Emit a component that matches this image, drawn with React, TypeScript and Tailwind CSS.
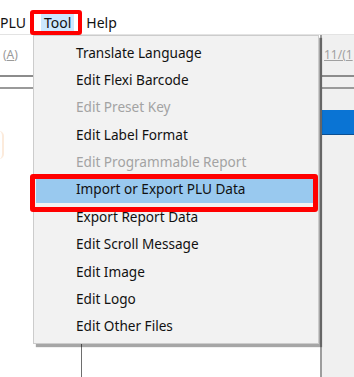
const items: { label: string; disabled?: boolean; active?: boolean }[] = [
  { label: "Translate Language" },
  { label: "Edit Flexi Barcode" },
  { label: "Edit Preset Key", disabled: true },
  { label: "Edit Label Format" },
  { label: "Edit Programmable Report", disabled: true },
  { label: "Import or Export PLU Data", active: true },
  { label: "Export Report Data" },
  { label: "Edit Scroll Message" },
  { label: "Edit Image" },
  { label: "Edit Logo" },
  { label: "Edit Other Files" },
];

export default function App() {
  return (
    <div className="relative w-[354px] h-[377px] overflow-hidden bg-white font-['Noto_Sans',sans-serif] text-[14px] text-[#111111]">
      {/* menu bar */}
      <div className="flex h-[35px] items-end pb-[1px] border-b border-[#e3e3e3] leading-[20px]">
        <span className="ml-0">PLU</span>
        <span className="ml-[15px] px-[3px] bg-[#cce8ff]">Tool</span>
        <span className="ml-[12px]">Help</span>
      </div>

      {/* window body */}
      <div className="flex h-[342px]">
        <div className="w-[33px] flex flex-col bg-white">
          <div className="h-[40px] pt-[12px] pl-[3px] text-[12px] text-[#9a9a9a] leading-[16px]">
            (<span className="underline">A</span>)
          </div>
          <div className="h-[2px] bg-[#8c8c8c]" />
          <div className="h-[10px]" />
          <div className="h-[2px] bg-[#9a9a9a]" />
          <div className="mt-[42px] ml-[-6px] w-[10px] h-[28px] rounded-full border-r-[2px] border-[#fcebdc]" />
        </div>
        <div className="flex-1 bg-white">
          <div className="ml-[48px] h-full border-l border-[#6e6e6e]" />
        </div>
        <div className="w-[34px] flex flex-col bg-[#f0f0f0] border-l-[2px] border-[#9d9d9d]">
          <div className="h-[40px] pt-[12px] pl-[2px] text-[12px] text-[#a0a0a0] leading-[16px] underline whitespace-nowrap">
            11/(1
          </div>
          <div className="h-[2px] bg-[#8c8c8c]" />
          <div className="h-[10px]" />
          <div className="h-[2px] bg-[#9a9a9a]" />
          <div className="mt-[21px] h-[25px] bg-[#0a74d4] border-b border-[#0b4f91]" />
        </div>
      </div>

      {/* dropdown menu */}
      <div className="absolute left-[33px] top-[35px] w-[286px] bg-[#f2f2f2] border border-[#cccccc] shadow-[3px_3px_1px_rgba(0,0,0,0.35)] py-[3px] text-[13.6px]">
        {items.map((it) => (
          <div
            key={it.label}
            className={`h-[27.4px] flex items-center pl-[40px] mx-[2px] whitespace-nowrap ${
              it.active ? "bg-[#99c9ef]" : ""
            } ${it.disabled ? "text-[#a3a3a3]" : "text-[#111111]"}`}
          >
            {it.label}
          </div>
        ))}
      </div>

      {/* annotation boxes */}
      <div className="absolute left-[30px] top-[10px] w-[52px] h-[25px] border-[4px] border-[#ff0000] rounded-[3px]" />
      <div className="absolute left-[30px] top-[174px] w-[288px] h-[38px] border-[5px] border-[#ff0000] rounded-[3px]" />
    </div>
  );
}
